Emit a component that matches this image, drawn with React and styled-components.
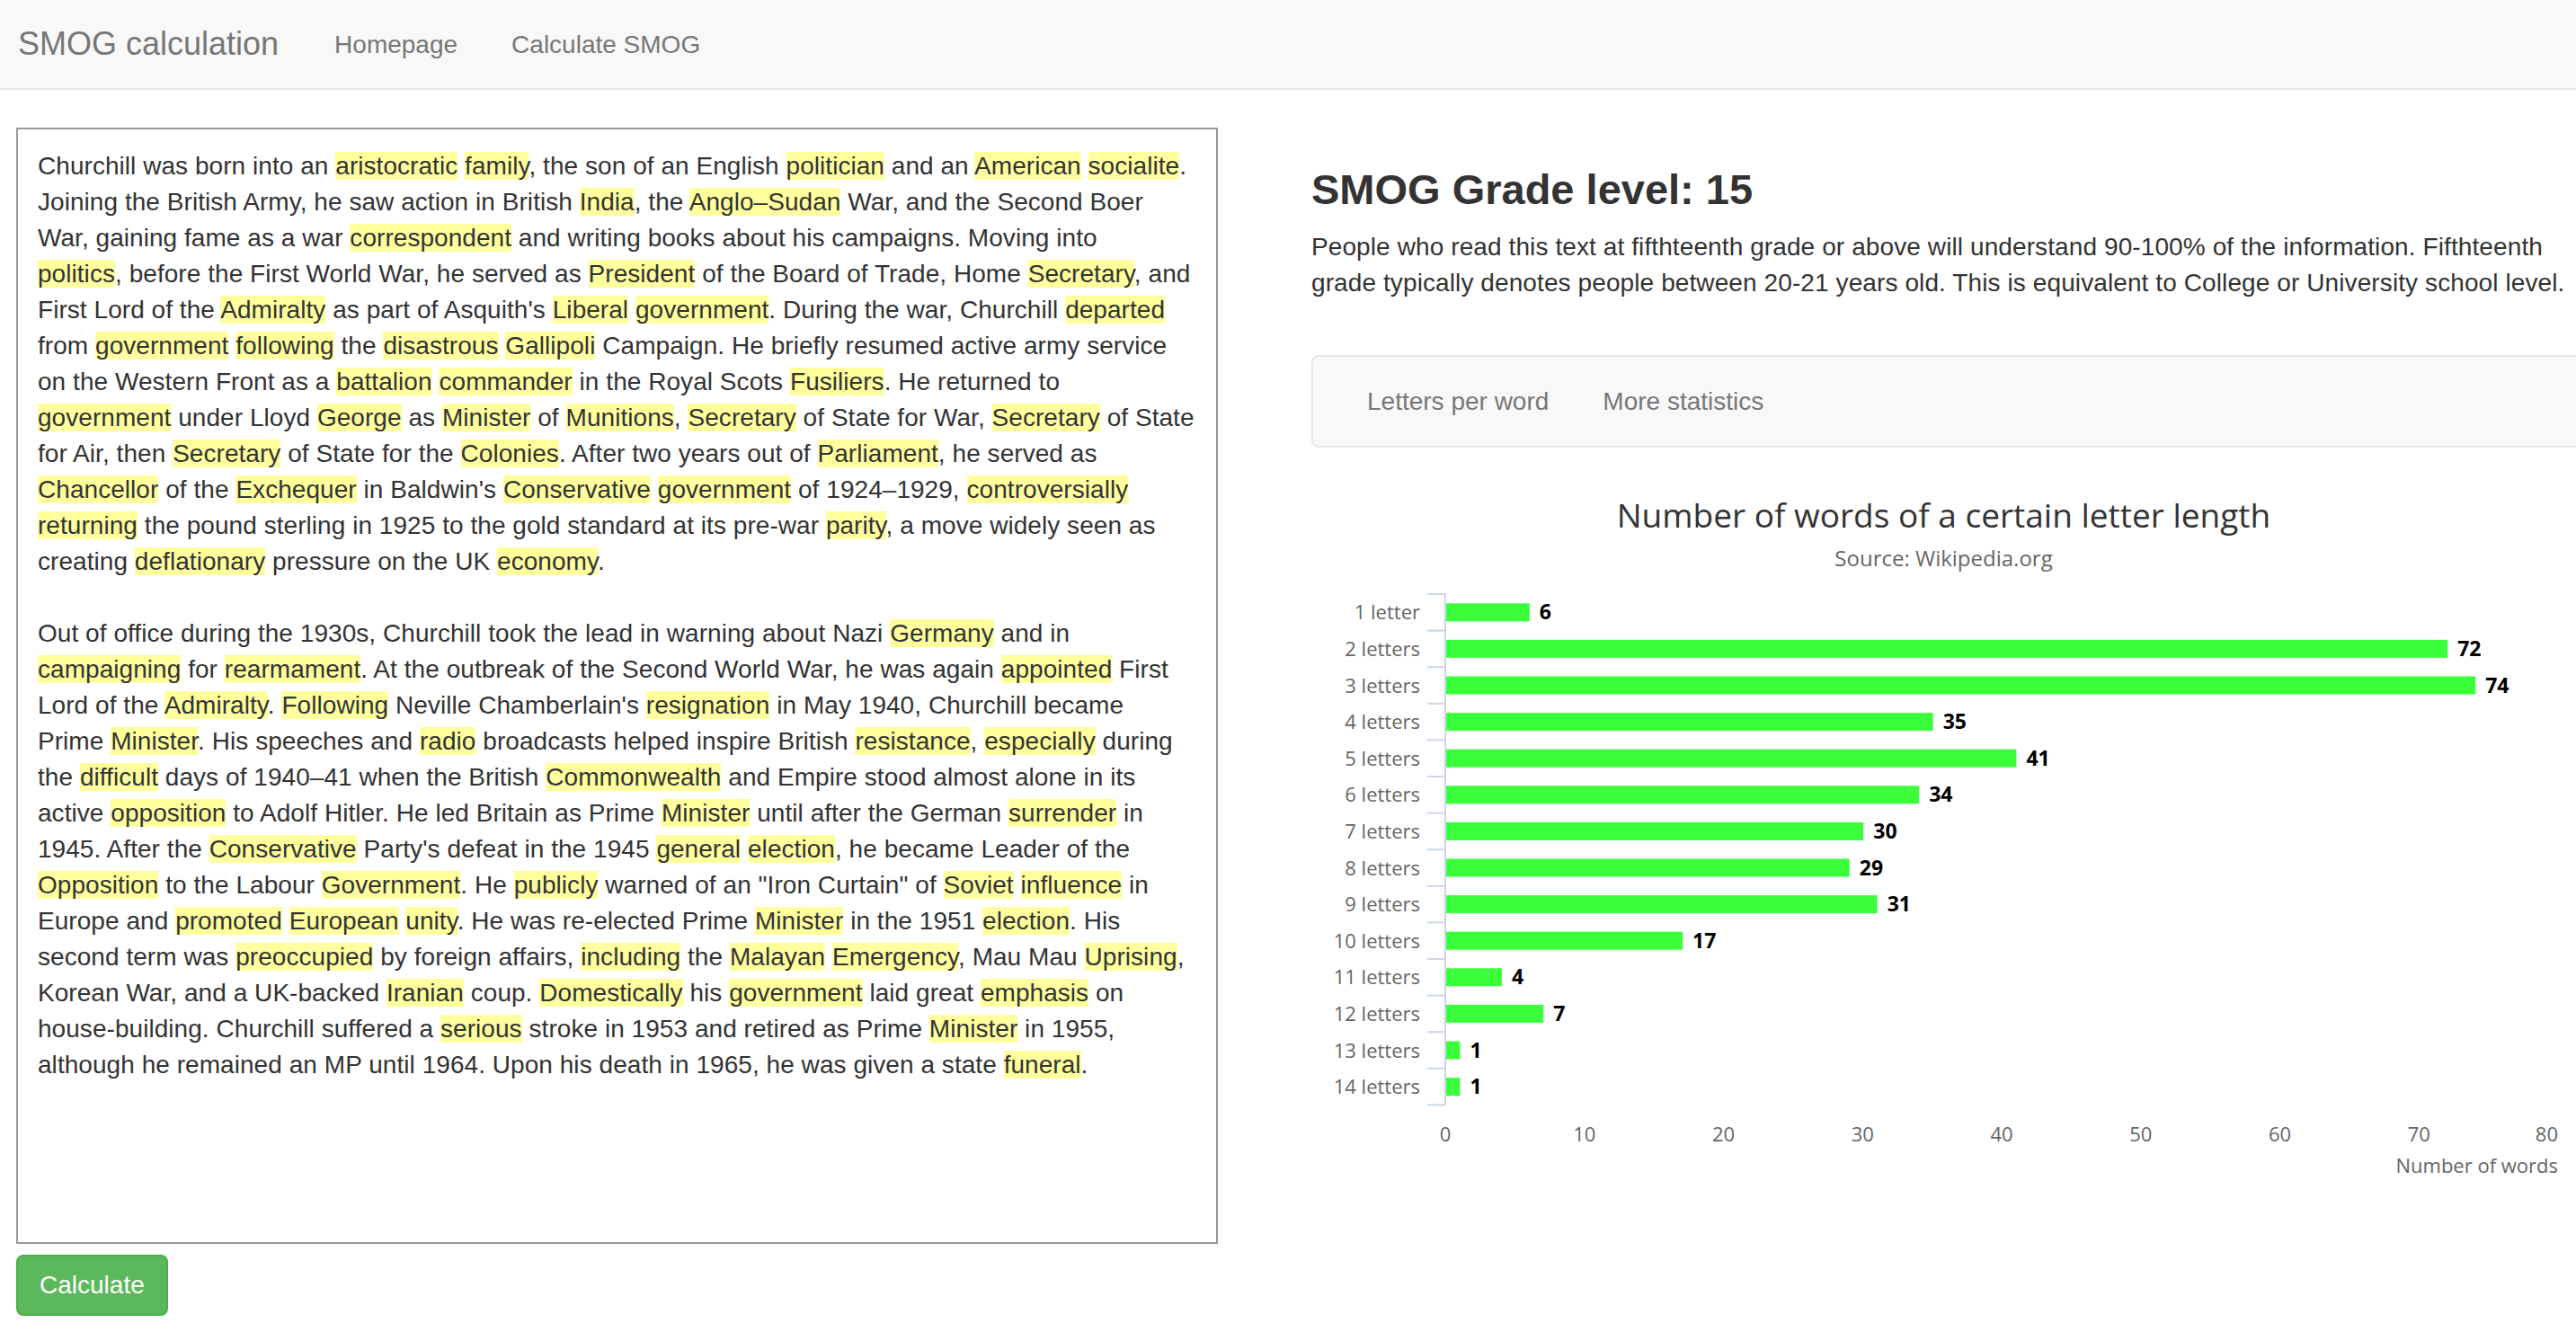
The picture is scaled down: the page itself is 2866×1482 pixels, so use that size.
import React from "react";
import styled, { createGlobalStyle } from "styled-components";

const GlobalStyle = createGlobalStyle`
  html, body {
    margin: 0;
    padding: 0;
    background: #fff;
    overflow-x: hidden;
  }
  body {
    font-family: "Liberation Sans", Arial, sans-serif;
    color: #333;
    font-size: 28px;
    line-height: 40px;
  }
`;

// [word] marks a highlighted word
const paragraphs = [
  [
    "Churchill was born into an [aristocratic] [family], the son of an English [politician] and an [American] [socialite].",
    "Joining the British Army, he saw action in British [India], the [Anglo–Sudan] War, and the Second Boer",
    "War, gaining fame as a war [correspondent] and writing books about his campaigns. Moving into",
    "[politics], before the First World War, he served as [President] of the Board of Trade, Home [Secretary], and",
    "First Lord of the [Admiralty] as part of Asquith's [Liberal] [government]. During the war, Churchill [departed]",
    "from [government] [following] the [disastrous] [Gallipoli] Campaign. He briefly resumed active army service",
    "on the Western Front as a [battalion] [commander] in the Royal Scots [Fusiliers]. He returned to",
    "[government] under Lloyd [George] as [Minister] of [Munitions], [Secretary] of State for War, [Secretary] of State",
    "for Air, then [Secretary] of State for the [Colonies]. After two years out of [Parliament], he served as",
    "[Chancellor] of the [Exchequer] in Baldwin's [Conservative] [government] of 1924–1929, [controversially]",
    "[returning] the pound sterling in 1925 to the gold standard at its pre-war [parity], a move widely seen as",
    "creating [deflationary] pressure on the UK [economy].",
  ],
  [
    "Out of office during the 1930s, Churchill took the lead in warning about Nazi [Germany] and in",
    "[campaigning] for [rearmament]. At the outbreak of the Second World War, he was again [appointed] First",
    "Lord of the [Admiralty]. [Following] Neville Chamberlain's [resignation] in May 1940, Churchill became",
    "Prime [Minister]. His speeches and [radio] broadcasts helped inspire British [resistance], [especially] during",
    "the [difficult] days of 1940–41 when the British [Commonwealth] and Empire stood almost alone in its",
    "active [opposition] to Adolf Hitler. He led Britain as Prime [Minister] until after the German [surrender] in",
    "1945. After the [Conservative] Party's defeat in the 1945 [general] [election], he became Leader of the",
    "[Opposition] to the Labour [Government]. He [publicly] warned of an \"Iron Curtain\" of [Soviet] [influence] in",
    "Europe and [promoted] [European] [unity]. He was re-elected Prime [Minister] in the 1951 [election]. His",
    "second term was [preoccupied] by foreign affairs, [including] the [Malayan] [Emergency], Mau Mau [Uprising],",
    "Korean War, and a UK-backed [Iranian] coup. [Domestically] his [government] laid great [emphasis] on",
    "house-building. Churchill suffered a [serious] stroke in 1953 and retired as Prime [Minister] in 1955,",
    "although he remained an MP until 1964. Upon his death in 1965, he was given a state [funeral].",
  ],
];

const chartData = [
  ["1 letter", 6],
  ["2 letters", 72],
  ["3 letters", 74],
  ["4 letters", 35],
  ["5 letters", 41],
  ["6 letters", 34],
  ["7 letters", 30],
  ["8 letters", 29],
  ["9 letters", 31],
  ["10 letters", 17],
  ["11 letters", 4],
  ["12 letters", 7],
  ["13 letters", 1],
  ["14 letters", 1],
];

const renderLine = (line) =>
  line.split(/(\[[^\]]+\])/).map((part, i) =>
    part.startsWith("[") ? <Mark key={i}>{part.slice(1, -1)}</Mark> : part
  );

const Chart = () => {
  const width = 1407;
  const height = 800;
  const plotLeft = 149;
  const plotRight = 1387;
  const plotTop = 123;
  const step = 40.6;
  const unit = (plotRight - plotLeft) / 80;
  const plotBottom = plotTop + step * chartData.length;
  const labelFont = "'Open Sans', 'DejaVu Sans', sans-serif";

  return (
    <svg width={width} height={height} viewBox={`0 0 ${width} ${height}`}>
      <text x={width / 2} y={49} textAnchor="middle" fontSize="37" fill="#333" fontFamily={labelFont}>
        Number of words of a certain letter length
      </text>
      <text x={width / 2} y={92} textAnchor="middle" fontSize="24" fill="#666" fontFamily={labelFont}>
        Source: Wikipedia.org
      </text>

      {chartData.map(([label, value], i) => {
        const cy = plotTop + step * i + step / 2;
        const barW = value * unit;
        return (
          <g key={label}>
            <text x={121} y={cy + 8} textAnchor="end" fontSize="22" fill="#666" fontFamily={labelFont}>
              {label}
            </text>
            <rect x={plotLeft + 1} y={cy - 10} width={barW} height={20} fill="#3cff3c" />
            <text
              x={plotLeft + barW + 12}
              y={cy + 8}
              fontSize="23"
              fontWeight="bold"
              fill="#000"
              fontFamily={labelFont}
            >
              {value}
            </text>
          </g>
        );
      })}

      {Array.from({ length: chartData.length + 1 }).map((_, k) => {
        const y = plotTop + step * k;
        return <line key={k} x1={129} x2={plotLeft} y1={y} y2={y} stroke="#ccd6eb" strokeWidth="2" />;
      })}
      <line x1={plotLeft} x2={plotLeft} y1={plotTop} y2={plotBottom} stroke="#ccd6eb" strokeWidth="2" />

      {[0, 10, 20, 30, 40, 50, 60, 70, 80].map((v) => {
        const last = v === 80;
        return (
          <text
            key={v}
            x={last ? plotRight : plotLeft + v * unit}
            y={732}
            textAnchor={last ? "end" : "middle"}
            fontSize="22"
            fill="#666"
            fontFamily={labelFont}
          >
            {v}
          </text>
        );
      })}
      <text x={plotRight} y={767} textAnchor="end" fontSize="22" fill="#666" fontFamily={labelFont}>
        Number of words
      </text>
    </svg>
  );
};

const App = () => {
  return (
    <>
      <GlobalStyle />
      <Navbar>
        <Brand>SMOG calculation</Brand>
        <NavLink>Homepage</NavLink>
        <NavLink>Calculate SMOG</NavLink>
      </Navbar>
      <Main>
        <LeftColumn>
          <TextBox>
            {paragraphs.map((lines, p) => (
              <Paragraph key={p}>
                {lines.map((line, i) => (
                  <Line key={i}>{renderLine(line)}</Line>
                ))}
              </Paragraph>
            ))}
          </TextBox>
          <CalculateButton>Calculate</CalculateButton>
        </LeftColumn>
        <RightColumn>
          <Heading>SMOG Grade level: 15</Heading>
          <Description>
            People who read this text at fifthteenth grade or above will understand 90-100% of the information. Fifthteenth
            <br />
            grade typically denotes people between 20-21 years old. This is equivalent to College or University school level.
          </Description>
          <TabBar>
            <Tab>Letters per word</Tab>
            <Tab>More statistics</Tab>
          </TabBar>
          <ChartWrap>
            <Chart />
          </ChartWrap>
        </RightColumn>
      </Main>
    </>
  );
};

const Navbar = styled.nav`
  height: 98px;
  display: flex;
  align-items: center;
  background-color: #f8f8f8;
  border-bottom: 2px solid #e7e7e7;
`;

const Brand = styled.div`
  font-size: 36px;
  color: #777;
  padding: 0 32px 0 20px;
`;

const NavLink = styled.div`
  font-size: 28px;
  color: #777;
  padding: 0 30px;
  margin-top: 2px;
`;

const Main = styled.div`
  display: flex;
  align-items: flex-start;
  gap: 104px;
  padding: 42px 0 0 18px;
`;

const LeftColumn = styled.div`
  width: 1337px;
  flex-shrink: 0;
`;

const TextBox = styled.div`
  box-sizing: border-box;
  height: 1242px;
  border: 2px solid #999;
  padding: 21px 22px 20px;
`;

const Paragraph = styled.div`
  margin-bottom: 40px;
  letter-spacing: 0.05px;
`;

const Line = styled.div`
  white-space: nowrap;
`;

const Mark = styled.span`
  background-color: #ffff9e;
`;

const CalculateButton = styled.button`
  margin-top: 12px;
  font-family: "Liberation Sans", Arial, sans-serif;
  font-size: 28px;
  line-height: 40px;
  color: #fff;
  background-color: #5cb85c;
  border: 2px solid #4cae4c;
  border-radius: 8px;
  padding: 12px 24px;
`;

const RightColumn = styled.div`
  width: 1440px;
  flex-shrink: 0;
`;

const Heading = styled.h2`
  font-size: 47px;
  font-weight: 700;
  line-height: 66px;
  margin: 36px 0 11px;
  color: #333;
`;

const Description = styled.p`
  margin: 0;
  white-space: nowrap;
  letter-spacing: 0.1px;
`;

const TabBar = styled.div`
  box-sizing: border-box;
  height: 103px;
  margin-top: 60px;
  display: flex;
  align-items: center;
  padding-left: 30px;
  background-color: #f8f8f8;
  border: 2px solid #e7e7e7;
  border-radius: 8px;
`;

const Tab = styled.div`
  font-size: 28px;
  color: #777;
  padding: 0 30px;
`;

const ChartWrap = styled.div`
  margin-top: 40px;
  width: 1407px;
`;

export default App;
